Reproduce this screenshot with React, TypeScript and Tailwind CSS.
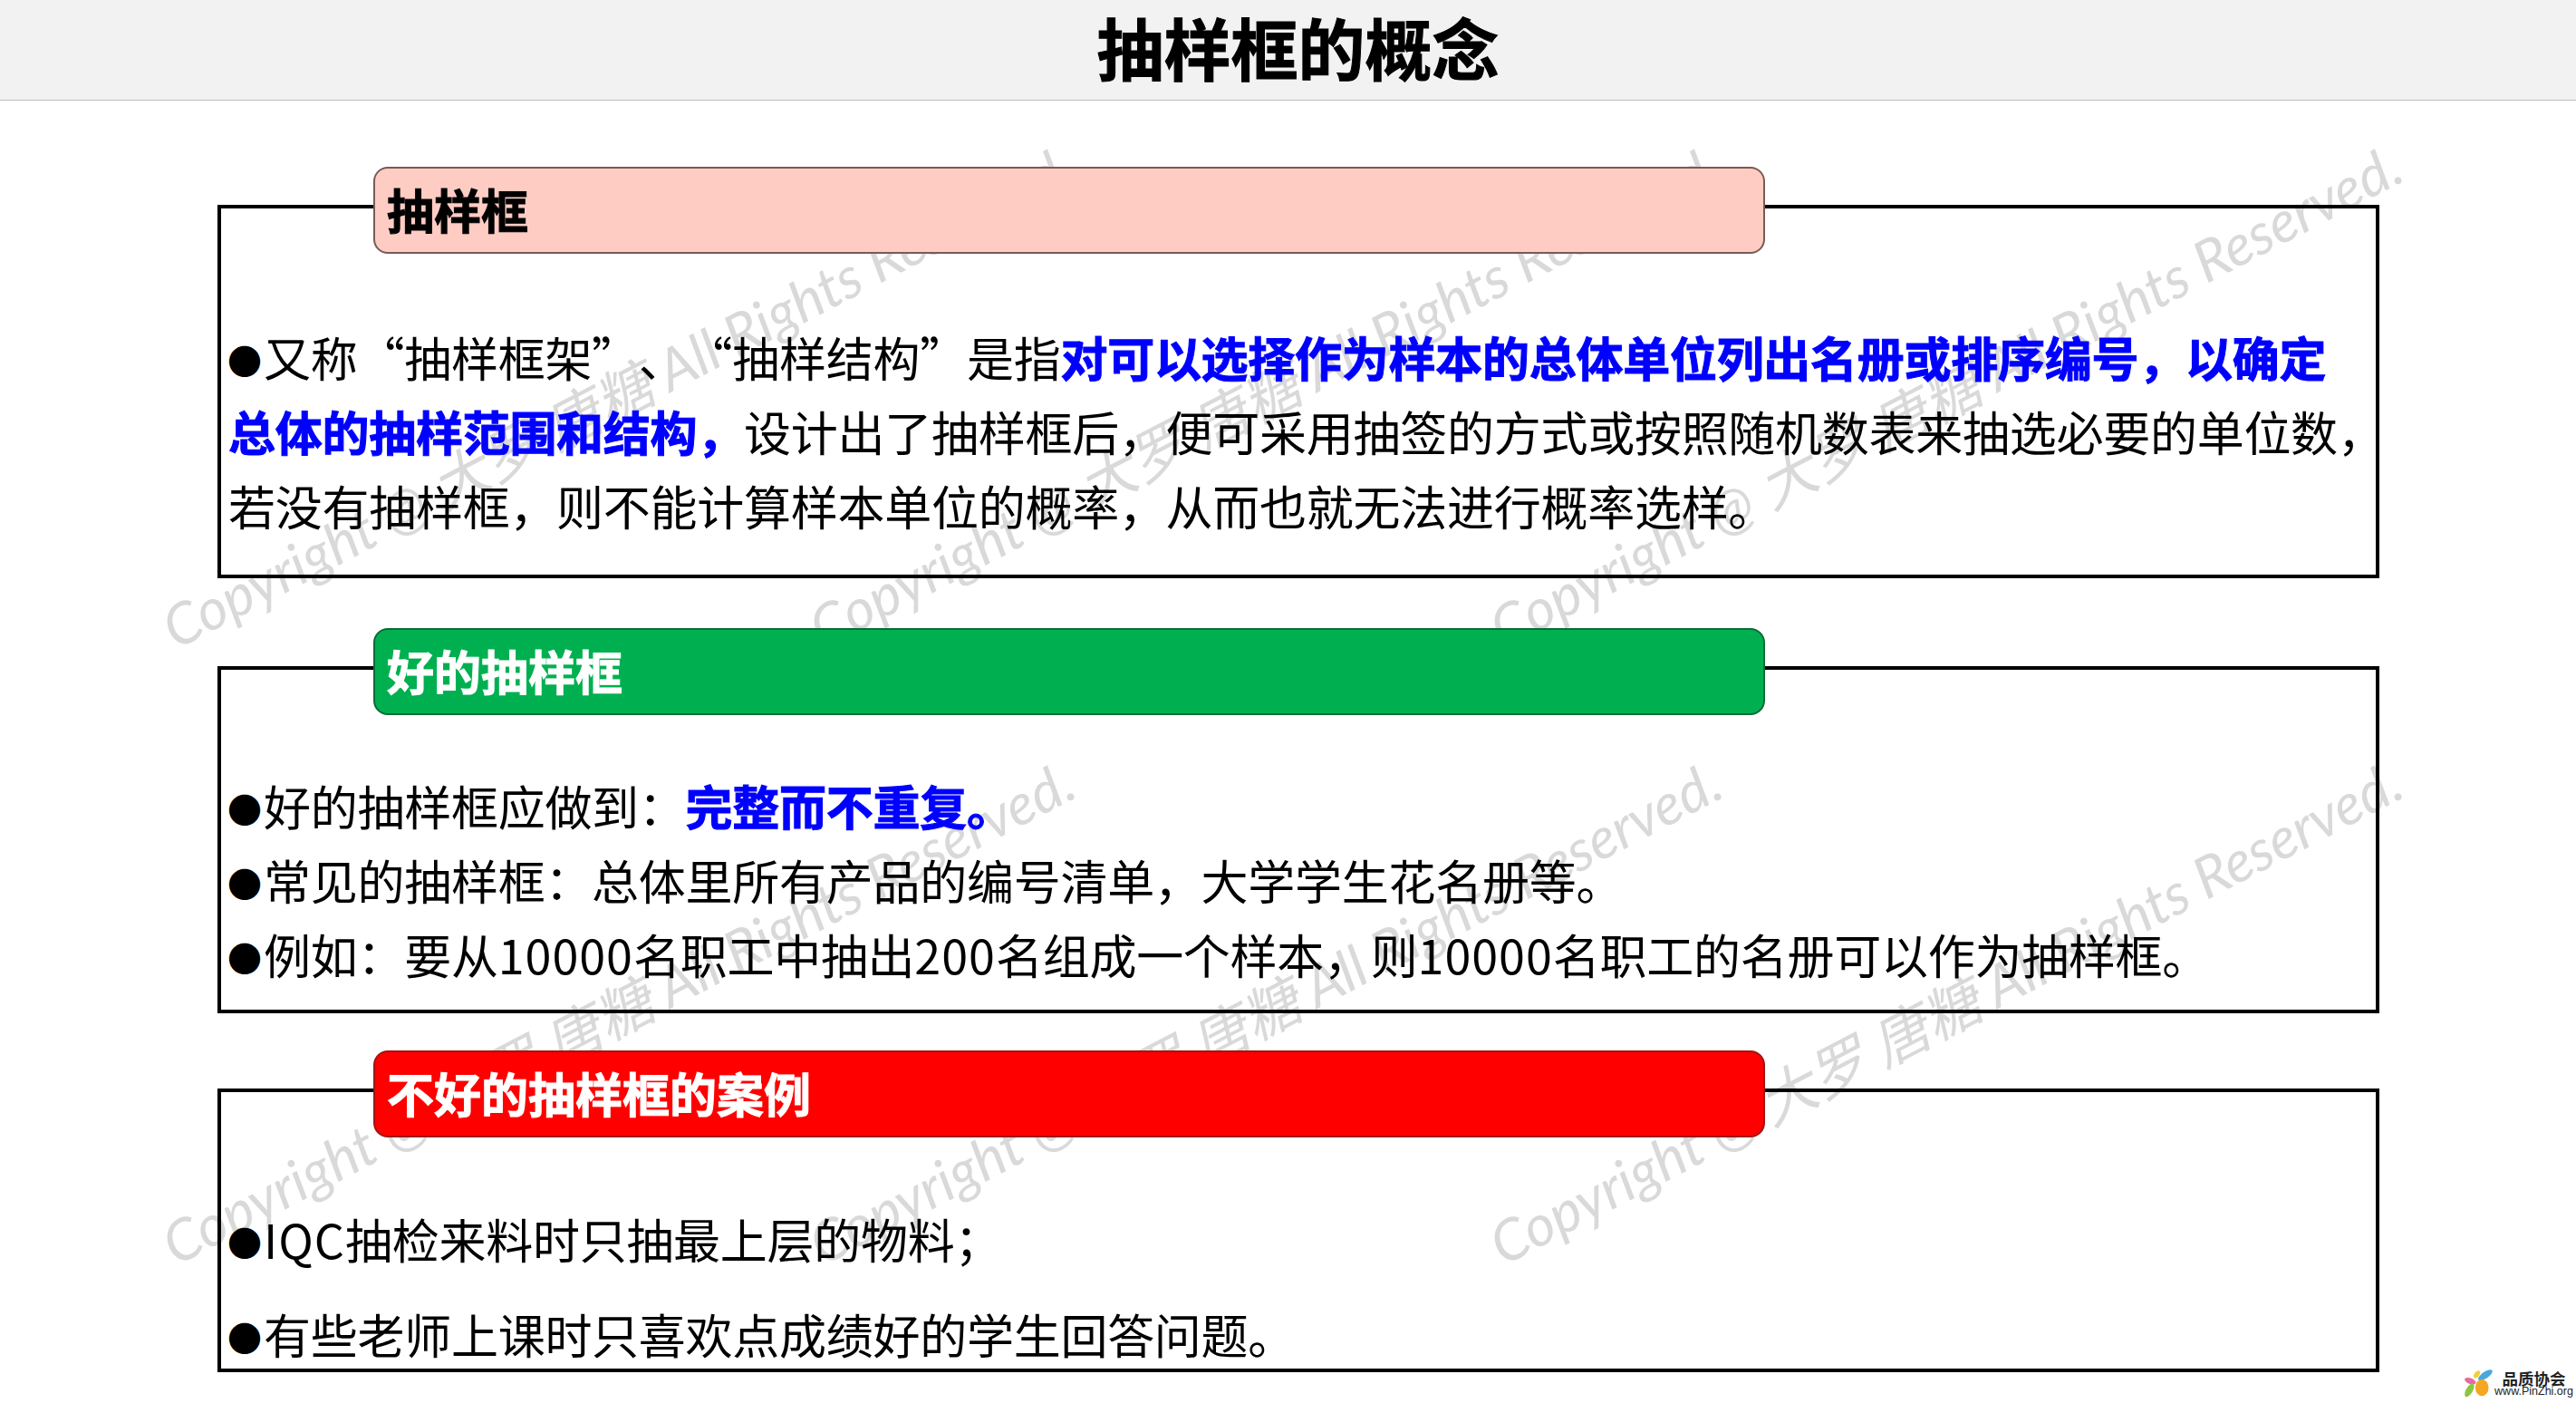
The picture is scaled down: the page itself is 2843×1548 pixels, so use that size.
import React from 'react';

const CJK = "font-['Noto_Sans_CJK_SC','Noto_Sans',sans-serif]";

const Dot = () => (
  <span className="inline-block w-[39px] text-left text-[38px] leading-none align-[3px] -indent-[1px] tracking-[-2px]">●</span>
);

const Blue = ({ children }: { children: React.ReactNode }) => (
  <b className="font-bold text-[#0000ff] [-webkit-text-stroke:1px_#0000ff]">{children}</b>
);

// latin runs are a little wider in the original font
const Num = ({ children }: { children: React.ReactNode }) => (
  <span className="tracking-[1px]">{children}</span>
);

const Mark = ({ className }: { className: string }) => (
  <div
    className={`absolute whitespace-nowrap origin-left rotate-[-27.5deg] italic text-[63px] leading-none text-[#d9d9d9] font-['Lato','Noto_Sans_CJK_SC',sans-serif] ${className}`}
  >
    Copyright @ 大罗 唐糖 All Rights Reserved.
  </div>
);

const Section = ({
  title,
  tabClass,
  boxClass,
  children,
}: {
  title: string;
  tabClass: string;
  boxClass: string;
  children: React.ReactNode;
}) => (
  <section className="relative z-10">
    <div
      className={`relative z-10 ml-[172px] w-[1536px] h-[96px] rounded-[16px] border-2 pl-[13px] pb-[3px] flex items-center text-[52px] font-bold ${tabClass}`}
    >
      {title}
    </div>
    <div className={`-mt-[54px] w-[2386px] border-4 border-black ${boxClass}`}>{children}</div>
  </section>
);

const App: React.FC = () => {
  return (
    <div className={`relative w-[2843px] h-[1548px] overflow-hidden bg-white text-black [text-spacing-trim:space-all] ${CJK}`}>
      {/* watermark layer */}
      <Mark className="left-[183px] top-[664px]" />
      <Mark className="left-[897px] top-[664px]" />
      <Mark className="left-[1648px] top-[664px]" />
      <Mark className="left-[183px] top-[1344px]" />
      <Mark className="left-[897px] top-[1344px]" />
      <Mark className="left-[1648px] top-[1344px]" />

      <header className="relative z-10 h-[111px] bg-[#f2f2f2] border-b border-[#bfbfbf] flex items-center justify-center pl-[22px] pb-[9px]">
        <h1 className="text-[74px] leading-none font-bold [-webkit-text-stroke:1px_black]">抽样框的概念</h1>
      </header>

      <main className="ml-[240px] pt-[73px]">
        <Section
          title="抽样框"
          tabClass="bg-[#ffccc4] border-[#7a5a55] text-black [-webkit-text-stroke:1px_black]"
          boxClass="h-[412px] pt-[123px] pl-[8px] text-[52px] leading-[82px] tracking-[-0.27px]"
        >
          <p className="whitespace-nowrap">
            <Dot />又称“抽样框架”、“抽样结构”是指<Blue>对可以选择作为样本的总体单位列出名册或排序编号，以确定</Blue>
          </p>
          <p className="whitespace-nowrap">
            <Blue>总体的抽样范围和结构，</Blue>设计出了抽样框后，便可采用抽签的方式或按照随机数表来抽选必要的单位数，
          </p>
          <p className="whitespace-nowrap">若没有抽样框，则不能计算样本单位的概率，从而也就无法进行概率选样。</p>
        </Section>

        <div className="mt-[55px]">
          <Section
            title="好的抽样框"
            tabClass="bg-[#00b050] border-[#0b6b3a] text-white [-webkit-text-stroke:1px_white]"
            boxClass="h-[383px] pt-[109px] pl-[8px] text-[52px] leading-[82px] tracking-[-0.27px]"
          >
            <p className="whitespace-nowrap">
              <Dot />好的抽样框应做到：<Blue>完整而不重复。</Blue>
            </p>
            <p className="whitespace-nowrap">
              <Dot />常见的抽样框：总体里所有产品的编号清单，大学学生花名册等。
            </p>
            <p className="whitespace-nowrap">
              <Dot />例如：要从<Num>10000</Num>名职工中抽出<Num>200</Num>名组成一个样本，则<Num>10000</Num>名职工的名册可以作为抽样框。
            </p>
          </Section>
        </div>

        <div className="mt-[41px]">
          <Section
            title="不好的抽样框的案例"
            tabClass="bg-[#ff0000] border-[#a31414] text-white [-webkit-text-stroke:1px_white]"
            boxClass="h-[313px] pt-[109px] pl-[8px] text-[52px] leading-[105px] tracking-[-0.27px]"
          >
            <p className="whitespace-nowrap">
              <Dot /><Num>IQC</Num>抽检来料时只抽最上层的物料；
            </p>
            <p className="whitespace-nowrap">
              <Dot />有些老师上课时只喜欢点成绩好的学生回答问题。
            </p>
          </Section>
        </div>
      </main>

      {/* logo in the corner */}
      <div className="absolute left-[2718px] top-[1510px] flex items-center gap-[2px]">
        <svg width="35" height="33" viewBox="0 0 38 34">
          <ellipse cx="9" cy="14" rx="7" ry="3.5" fill="#e86aa0" transform="rotate(20 9 14)" />
          <ellipse cx="17" cy="6" rx="3" ry="5" fill="#f4cf3a" transform="rotate(35 17 6)" />
          <ellipse cx="27" cy="7" rx="10" ry="4" fill="#4aa8dc" transform="rotate(-35 27 7)" />
          <ellipse cx="8" cy="25" rx="4" ry="9" fill="#8cc63f" transform="rotate(30 8 25)" />
          <ellipse cx="23" cy="22" rx="8" ry="10" fill="#f5a623" />
        </svg>
        <div className="w-[83px] flex flex-col items-center leading-none text-[#222]">
          <span className="text-[17.5px] font-bold font-['Noto_Sans_CJK_SC',serif]">品质协会</span>
          <span className="text-[12.5px] font-['Liberation_Sans',sans-serif]">www.PinZhi.org</span>
        </div>
      </div>
    </div>
  );
};

export default App;
